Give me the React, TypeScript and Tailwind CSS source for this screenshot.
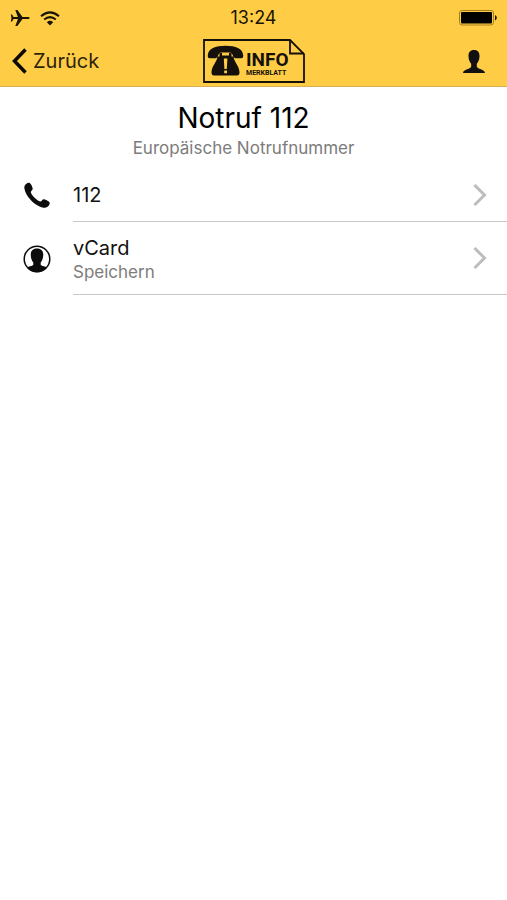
import React from "react";

function StatusBar() {
  return (
    <div className="grid h-9 grid-cols-3 items-center px-2.5">
      <div className="flex items-center gap-2.5">
        <svg width="20" height="18" viewBox="0 0 20 18" role="img" aria-label="Flugmodus">
          <path
            d="M19.6 9c0 .8-.9 1.100-1.800 1.100h-5.300L7.400 17H5.300l2.600-6.900H3.600L2 12.400H.8L1.500 9 .8 5.600H2l1.600 2.300h4.300L5.300 1h2.100l5.100 6.900h5.300c.9 0 1.800.3 1.800 1.100z"
            fill="#1a1503"
          />
        </svg>
        <svg width="20" height="15" viewBox="0 0 20 15" fill="none" stroke="#1a1503" strokeWidth="2" role="img" aria-label="WLAN">
          <path d="M1 5.200Q10-2.400 19 5.200" />
          <path d="M4.200 8.600Q10 3.600 15.800 8.600" />
          <path d="M10 14.500 6.800 11.300Q10 8.400 13.200 11.300z" fill="#1a1503" stroke="none" />
        </svg>
      </div>
      <div className="text-center text-lg leading-6 text-[#1a1503]">13:24</div>
      <svg className="justify-self-end" width="38" height="16" viewBox="0 0 38 16" role="img" aria-label="Akku voll">
        <rect x=".5" y=".5" width="34" height="14.500" rx="2.500" fill="none" stroke="#a87e1c" />
        <rect x="2" y="2" width="31" height="11.500" rx="1" fill="#000" />
        <path d="M36 5.200c2.400.6 2.400 4.600 0 5.200z" fill="#1a1503" />
      </svg>
    </div>
  );
}

function Logo() {
  return (
    <svg width="102" height="44" viewBox="0 0 102 44" role="img" aria-label="Info Merkblatt">
      <path d="M1 1h86l14 14v28H1z" fill="none" stroke="#15110a" strokeWidth="1.800" />
      <path d="M87 1v13.500h14" fill="none" stroke="#15110a" strokeWidth="1.800" />
      <path
        d="M16.500 14h2.500v2.500h7V14h2.500v3.500h2c.5 5.500 6 9.500 6 16 0 2-.8 3-2.500 3H11c-1.700 0-2.500-1-2.500-3 0-6.500 5.500-10.500 6-16h2z"
        fill="#15110a"
      />
      <path
        d="M4.800 16C5.500 9.500 12 6.800 22.500 6.800S39.500 9.500 40.200 16c.2 2.300-.3 3.200-2 3.200h-5.500c-1.500 0-2.200-.8-2.700-2.200-.6-2-1.500-3.500-3.500-3.500h-8c-2 0-2.900 1.500-3.500 3.500-.5 1.400-1.200 2.200-2.700 2.200H6.800c-1.700 0-2.200-.9-2-3.200z"
        fill="#15110a"
      />
      <path d="M20.800 19.500h3.600l-.6 10.500h-2.400zM21.200 31.500h2.800v2.800h-2.800z" fill="#ffcc45" />
      <g fill="#15110a" fontFamily="Roboto, sans-serif" fontWeight="700">
        <text x="43" y="27" fontSize="19">INFO</text>
        <text x="43" y="36" fontSize="7">MERKBLATT</text>
      </g>
    </svg>
  );
}

function NavBar() {
  return (
    <div className="grid h-[50px] grid-cols-[1fr_auto_1fr] items-center px-3">
      <button type="button" className="flex items-center gap-1.5 justify-self-start text-xl leading-6 text-[#2c230c]">
        <svg width="15" height="26" viewBox="0 0 15 26" fill="none" stroke="#0b0902" strokeWidth="3.500" aria-hidden="true">
          <path d="M13.500 1.500 2.500 13l11 11.500" />
        </svg>
        Zurück
      </button>
      <Logo />
      <button type="button" aria-label="Profil" className="mr-2.5 justify-self-end">
        <svg width="22" height="23" viewBox="0 0 22 23" fill="#111" aria-hidden="true">
          <path d="M11 0c4 0 5.700 2.500 5.500 6.500-.1 3.500-1.400 5.700-2.700 7.300v2.800c0 2.600 8.200 2.600 8.200 6.400H0c0-3.800 8.200-3.800 8.200-6.400v-2.800C6.900 12.200 5.600 10 5.500 6.500 5.300 2.500 7 0 11 0z" />
        </svg>
      </button>
    </div>
  );
}

function PhoneIcon() {
  return (
    <svg width="28" height="28" viewBox="0 0 28 28" fill="#0c0c0c" aria-hidden="true">
      <path d="M2.500 2.500C4 1 6 .4 7 1.200c1.500 1.300 2.700 4.300 2.700 5.800 0 1.200-2 2-1.900 3.300.3 2.500 6.700 9 9.300 9.200 1.500.1 2.200-2.300 3.500-2.300 1.500 0 4.800 1.500 5.900 3 .8 1.200-.5 3.700-2.300 4.900-1.200.8-3 1-5 .4-4.200-1.200-8.500-4.200-11.500-7.500C4.500 14.500 2 10.500 1.400 6.500c-.2-1.500.1-3 1.100-4z" />
    </svg>
  );
}

function ContactIcon() {
  return (
    <svg width="28" height="28" viewBox="0 0 28 28" aria-hidden="true">
      <circle cx="14" cy="14" r="12.800" fill="none" stroke="#0c0c0c" strokeWidth="1.500" />
      <path
        d="M14 3.500c4.500 0 6.500 2.700 6.200 7-.1 3-1.200 5.500-2.500 7v2c0 1.300 3.500 1.700 6.300 2.900C22 25.500 18 27.200 14 27.200S6 25.500 4 22.400c2.800-1.200 6.300-1.600 6.300-2.900v-2c-1.300-1.500-2.400-4-2.500-7-.3-4.300 1.700-7 6.200-7z"
        fill="#0c0c0c"
      />
    </svg>
  );
}

function Chevron() {
  return (
    <svg width="14" height="22" viewBox="0 0 14 22" fill="none" stroke="#bdbdbd" strokeWidth="3" aria-hidden="true">
      <path d="M1.500 1 11.500 11l-10 10" />
    </svg>
  );
}

type RowProps = { icon: React.ReactNode; title: string; subtitle?: string };

function Row({ icon, title, subtitle }: RowProps) {
  return (
    <li>
      <button type="button" className="flex w-full items-stretch text-left">
        <span className="flex w-[73px] shrink-0 items-center pl-[23px]">{icon}</span>
        <span className="flex flex-1 items-center justify-between border-b border-[#c8c8c8] py-3 pr-5">
          <span className="flex flex-col">
            <span className="text-xl leading-7 text-[#111]">{title}</span>
            {subtitle && <span className="text-[17px] leading-5 text-[#7c7c7c]">{subtitle}</span>}
          </span>
          <Chevron />
        </span>
      </button>
    </li>
  );
}

export default function App() {
  return (
    <div className="min-h-screen bg-white font-['Inter',sans-serif]">
      <header className="border-b border-[#d9b154] bg-[#ffcc45]">
        <StatusBar />
        <NavBar />
      </header>
      <main>
        <div className="pt-[15px] pr-5 text-center">
          <h1 className="text-[28px] leading-8 text-black">Notruf 112</h1>
          <p className="pt-0.5 text-[17px] leading-6 text-[#7c7c7c]">Europäische Notrufnummer</p>
        </div>
        <ul className="pt-[9px]">
          <Row icon={<PhoneIcon />} title="112" />
          <Row icon={<ContactIcon />} title="vCard" subtitle="Speichern" />
        </ul>
      </main>
    </div>
  );
}
